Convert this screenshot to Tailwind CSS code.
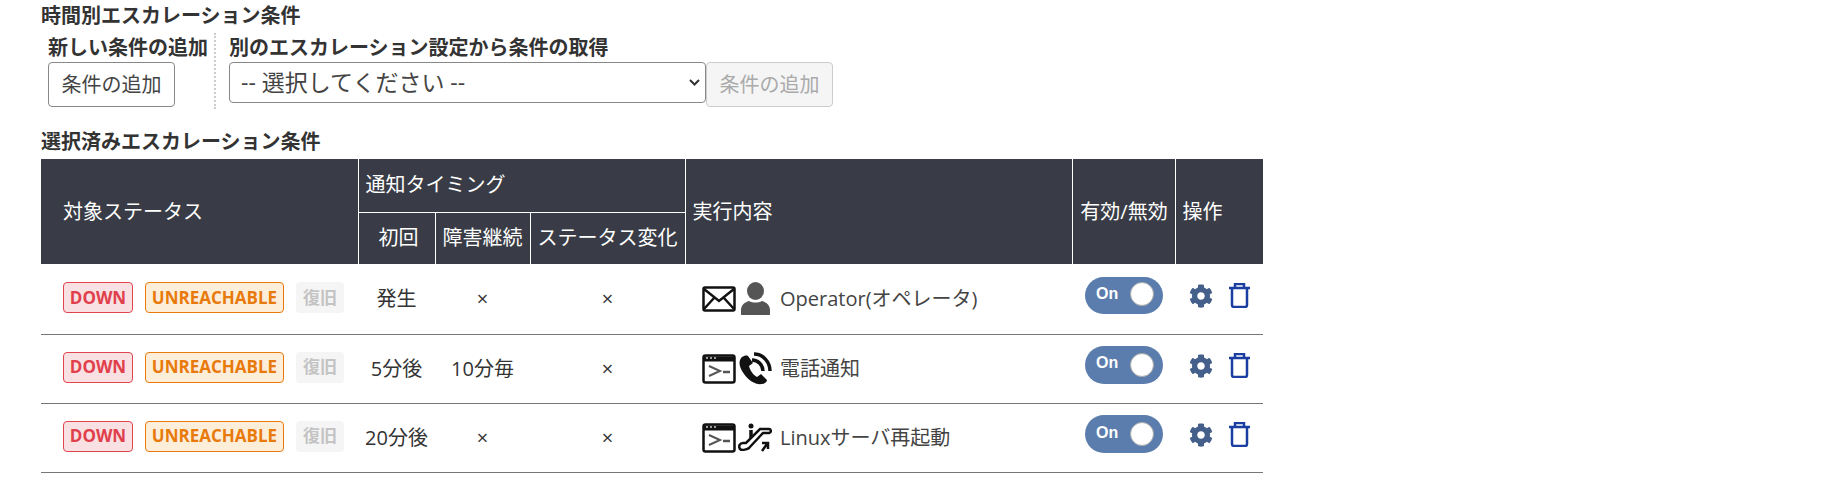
<!DOCTYPE html>
<html lang="ja">
<head>
<meta charset="UTF-8">
<title>時間別エスカレーション条件</title>
<script src="https://cdn.jsdelivr.net/npm/@tailwindcss/browser@4"></script>
</head>
<body class="bg-white text-[#333] text-[20px] font-['Open_Sans','Noto_Sans_CJK_JP',sans-serif]">
<div class="pl-[41px] pt-[1px] w-[1263px]">
	<!-- Conditions picker -->
	<h3 class="font-bold text-[20px] leading-[30px] h-[30px] text-[#333]">時間別エスカレーション条件</h3>
	<div class="flex pl-[7px] h-[76px] mt-[2px]">
		<div class="w-[168px] border-r-2 border-dotted border-[#ccc]">
			<div class="font-bold leading-[29px] text-[#333]">新しい条件の追加</div>
			<button class="h-[45px] w-[127px] border border-[#888] rounded-[4px] bg-white text-[#444]">条件の追加</button>
		</div>
		<div class="pl-[13px]">
			<div class="font-bold leading-[29px] text-[#333]">別のエスカレーション設定から条件の取得</div>
			<div class="flex items-start">
				<div class="relative">
					<select class="block appearance-none w-[477px] h-[41px] pl-[11px] border border-[#888] rounded-[4px] bg-white text-[#444] text-[23px] leading-none">
						<option>-- 選択してください --</option>
					</select>
					<svg class="absolute right-[6px] top-[17px] w-[11px] h-[7px]" viewBox="0 0 11 7" fill="none" stroke="#333" stroke-width="2"><path d="M1 1l4.500 4.500L10 1"/></svg>
				</div>
				<button disabled class="h-[45px] w-[127px] border border-[#ccc] rounded-[4px] bg-[#f5f5f5] text-[#aaa]">条件の追加</button>
			</div>
		</div>
	</div>
	<h3 class="font-bold leading-[30px] h-[30px] mt-[18px] text-[#333]">選択済みエスカレーション条件</h3>

	<!-- Selected conditions -->
	<table class="table-fixed w-[1222px] border-collapse mt-[2px]">
		<colgroup>
			<col class="w-[317px]"><col class="w-[77px]"><col class="w-[95px]"><col class="w-[155px]"><col class="w-[387px]"><col class="w-[103px]"><col class="w-[88px]">
		</colgroup>
		<thead class="bg-[#393c46] text-white">
			<tr class="h-[53px]">
				<th rowspan="2" class="font-normal text-left pl-[22px] border-r border-white">対象ステータス</th>
				<th colspan="3" class="font-normal text-left pl-[7px] border-r border-b border-white">通知タイミング</th>
				<th rowspan="2" class="font-normal text-left pl-[7px] border-r border-white">実行内容</th>
				<th rowspan="2" class="font-normal text-center pl-[1px] border-r border-white">有効/無効</th>
				<th rowspan="2" class="font-normal text-left pl-[7px]">操作</th>
			</tr>
			<tr class="h-[52px]">
				<th class="font-normal pl-[4px] border-r border-white">初回</th>
				<th class="font-normal border-r border-white">障害継続</th>
				<th class="font-normal border-r border-white">ステータス変化</th>
			</tr>
		</thead>
		<tbody>
			<tr class="h-[70px] border-b border-[#777]">
				<td class="pl-[22px]">
					<div class="flex gap-3 items-center -mt-[3px]">
						<span class="h-[31px] w-[70px] flex items-center justify-center rounded-[4px] border border-[#e0454f] bg-[#f9e0e3] text-[#e0404b] font-bold text-[17px]">DOWN</span>
						<span class="h-[31px] w-[139px] flex items-center justify-center rounded-[4px] border border-[#e87a0c] bg-[#fdeeda] text-[#e87a0c] font-bold text-[17px]">UNREACHABLE</span>
						<span class="h-[31px] w-[48px] flex items-center justify-center rounded-[4px] bg-[#f5f5f5] text-[#c4c4c4] font-bold text-[17px]">復旧</span>
					</div>
				</td>
				<td class="text-center">発生</td>
				<td class="text-center">×</td>
				<td class="text-center">×</td>
				<td class="pl-[17px]">
					<div class="flex items-center">
						<svg class="w-[34px] h-[26px]" viewBox="0 0 34 26" fill="none" stroke="#111" stroke-width="2.5"><rect x="1.5" y="1.5" width="31" height="23" rx="1.5"/><path d="M2 3l15 12L32 3M2 23l10-11M32 23L22 12"/></svg>
						<svg class="w-[29px] h-[33px] ml-[5px]" viewBox="0 0 29 33" fill="#555"><ellipse cx="14.5" cy="9" rx="8.5" ry="9"/><path d="M0 33v-5c0-5 4-8 8-9 4 2 9 2 13 0 4 1 8 4 8 9v5z"/></svg>
						<span class="ml-[10px] text-[#444]">Operator(オペレータ)</span>
					</div>
				</td>
				<td>
					<div class="flex items-center justify-between w-[78px] h-[37px] ml-[13px] -mt-[6px] pl-[11px] pr-[9px] rounded-full bg-[#5a7dad]">
						<span class="text-white font-bold text-[16px] font-['Liberation_Sans',sans-serif] -mt-[4px]">On</span>
						<span class="w-[24px] h-[24px] rounded-full bg-white border border-[#a9a9a9] -mt-[3px]"></span>
					</div>
				</td>
				<td>
					<div class="flex items-center gap-[16px] pl-[14px] -mt-[6px]">
						<svg class="w-[24px] h-[24px]" viewBox="0 0 512 512" fill="#44608a"><path d="M487.4 315.7l-42.6-24.6c4.3-23.2 4.3-47 0-70.2l42.6-24.6c4.9-2.8 7.1-8.6 5.5-14-11.1-35.6-30-67.8-54.7-94.6-3.8-4.1-10-5.1-14.8-2.3L380.8 110c-17.9-15.4-38.5-27.3-60.8-35.1V25.8c0-5.6-3.9-10.5-9.4-11.7-36.7-8.2-74.3-7.8-109.2 0-5.5 1.2-9.4 6.1-9.4 11.7V75c-22.2 7.9-42.8 19.8-60.8 35.1L88.7 85.5c-4.9-2.8-11-1.9-14.8 2.3-24.7 26.7-43.6 58.9-54.7 94.6-1.7 5.4.6 11.2 5.5 14L67.3 221c-4.3 23.2-4.3 47 0 70.2l-42.6 24.6c-4.9 2.8-7.1 8.6-5.5 14 11.1 35.6 30 67.8 54.7 94.6 3.8 4.1 10 5.1 14.8 2.3l42.6-24.6c17.9 15.4 38.5 27.3 60.8 35.1v49.2c0 5.6 3.9 10.5 9.4 11.7 36.7 8.2 74.3 7.8 109.2 0 5.5-1.2 9.4-6.1 9.4-11.7v-49.2c22.2-7.9 42.8-19.8 60.8-35.1l42.6 24.6c4.9 2.8 11 1.9 14.8-2.3 24.7-26.7 43.6-58.9 54.7-94.6 1.5-5.5-.7-11.3-5.6-14.1zM256 336c-44.1 0-80-35.9-80-80s35.9-80 80-80 80 35.9 80 80-35.9 80-80 80z"/></svg>
						<svg class="w-[21px] h-[25px]" viewBox="0 0 21 25" fill="none" stroke="#1a3fa0" stroke-width="2.5"><path d="M0 5h21M3 5v17c0 1.500 1 2 2 2h11c1 0 2-.5 2-2V5M6 5V1h9v4"/></svg>
					</div>
				</td>
			</tr>
			<tr class="h-[69px] border-b border-[#777]">
				<td class="pl-[22px]">
					<div class="flex gap-3 items-center -mt-[3px]">
						<span class="h-[31px] w-[70px] flex items-center justify-center rounded-[4px] border border-[#e0454f] bg-[#f9e0e3] text-[#e0404b] font-bold text-[17px]">DOWN</span>
						<span class="h-[31px] w-[139px] flex items-center justify-center rounded-[4px] border border-[#e87a0c] bg-[#fdeeda] text-[#e87a0c] font-bold text-[17px]">UNREACHABLE</span>
						<span class="h-[31px] w-[48px] flex items-center justify-center rounded-[4px] bg-[#f5f5f5] text-[#c4c4c4] font-bold text-[17px]">復旧</span>
					</div>
				</td>
				<td class="text-center">5分後</td>
				<td class="text-center">10分毎</td>
				<td class="text-center">×</td>
				<td class="pl-[17px]">
					<div class="flex items-center">
						<svg class="w-[34px] h-[30px]" viewBox="0 0 34 30" fill="none" stroke="#111" stroke-width="2.5"><rect x="1.5" y="1.5" width="31" height="27" rx="2"/><path d="M2 5h30" stroke-width="5"/><path d="M4 4h2M8 4h2M12 4h2" stroke="#ccc" stroke-width="1.500"/><path d="M7 12l11 5-11 5" stroke="#555" stroke-width="2"/><path d="M21 18h7" stroke="#555" stroke-width="2.500"/></svg>
						<svg class="w-[34px] h-[34px] ml-[2px]" viewBox="0 0 34 34" fill="none" stroke="#111"><path d="M4 5c-4 4-3 10 2 17 5 7 12 11 18 10 2 0 5-2 5-4l-6-6-4 3c-4-2-7-7-8-11l4-3-5-7c-2-1-4 0-6 1z" fill="#111" stroke="none"/><path d="M14 8c6 0 11 5 11 11M16 2c9 0 16 8 16 17" stroke-width="3.500"/></svg>
						<span class="ml-[8px] text-[#444]">電話通知</span>
					</div>
				</td>
				<td>
					<div class="flex items-center justify-between w-[78px] h-[38px] ml-[13px] -mt-[7px] pl-[11px] pr-[9px] rounded-full bg-[#5a7dad]">
						<span class="text-white font-bold text-[16px] font-['Liberation_Sans',sans-serif] -mt-[4px]">On</span>
						<span class="w-[24px] h-[24px] rounded-full bg-white border border-[#a9a9a9] -mt-[1px]"></span>
					</div>
				</td>
				<td>
					<div class="flex items-center gap-[16px] pl-[14px] -mt-[6px]">
						<svg class="w-[24px] h-[24px]" viewBox="0 0 512 512" fill="#44608a"><path d="M487.4 315.7l-42.6-24.6c4.3-23.2 4.3-47 0-70.2l42.6-24.6c4.9-2.8 7.1-8.6 5.5-14-11.1-35.6-30-67.8-54.7-94.6-3.8-4.1-10-5.1-14.8-2.3L380.8 110c-17.9-15.4-38.5-27.3-60.8-35.1V25.8c0-5.6-3.9-10.5-9.4-11.7-36.7-8.2-74.3-7.8-109.2 0-5.5 1.2-9.4 6.1-9.4 11.7V75c-22.2 7.9-42.8 19.8-60.8 35.1L88.7 85.5c-4.9-2.8-11-1.9-14.8 2.3-24.7 26.7-43.6 58.9-54.7 94.6-1.7 5.4.6 11.2 5.5 14L67.3 221c-4.3 23.2-4.3 47 0 70.2l-42.6 24.6c-4.9 2.8-7.1 8.6-5.5 14 11.1 35.6 30 67.8 54.7 94.6 3.8 4.1 10 5.1 14.8 2.3l42.6-24.6c17.9 15.4 38.5 27.3 60.8 35.1v49.2c0 5.6 3.9 10.5 9.4 11.7 36.7 8.2 74.3 7.8 109.2 0 5.5-1.2 9.4-6.1 9.4-11.7v-49.2c22.2-7.9 42.8-19.8 60.8-35.1l42.6 24.6c4.9 2.8 11 1.9 14.8-2.3 24.7-26.7 43.6-58.9 54.7-94.6 1.5-5.5-.7-11.3-5.6-14.1zM256 336c-44.1 0-80-35.9-80-80s35.9-80 80-80 80 35.9 80 80-35.9 80-80 80z"/></svg>
						<svg class="w-[21px] h-[25px]" viewBox="0 0 21 25" fill="none" stroke="#1a3fa0" stroke-width="2.5"><path d="M0 5h21M3 5v17c0 1.500 1 2 2 2h11c1 0 2-.5 2-2V5M6 5V1h9v4"/></svg>
					</div>
				</td>
			</tr>
			<tr class="h-[69px] border-b border-[#777]">
				<td class="pl-[22px]">
					<div class="flex gap-3 items-center -mt-[3px]">
						<span class="h-[31px] w-[70px] flex items-center justify-center rounded-[4px] border border-[#e0454f] bg-[#f9e0e3] text-[#e0404b] font-bold text-[17px]">DOWN</span>
						<span class="h-[31px] w-[139px] flex items-center justify-center rounded-[4px] border border-[#e87a0c] bg-[#fdeeda] text-[#e87a0c] font-bold text-[17px]">UNREACHABLE</span>
						<span class="h-[31px] w-[48px] flex items-center justify-center rounded-[4px] bg-[#f5f5f5] text-[#c4c4c4] font-bold text-[17px]">復旧</span>
					</div>
				</td>
				<td class="text-center">20分後</td>
				<td class="text-center">×</td>
				<td class="text-center">×</td>
				<td class="pl-[17px]">
					<div class="flex items-center">
						<svg class="w-[34px] h-[30px]" viewBox="0 0 34 30" fill="none" stroke="#111" stroke-width="2.5"><rect x="1.5" y="1.5" width="31" height="27" rx="2"/><path d="M2 5h30" stroke-width="5"/><path d="M4 4h2M8 4h2M12 4h2" stroke="#ccc" stroke-width="1.500"/><path d="M7 12l11 5-11 5" stroke="#555" stroke-width="2"/><path d="M21 18h7" stroke="#555" stroke-width="2.500"/></svg>
						<svg class="w-[34px] h-[30px] ml-[2px]" viewBox="0 0 34 30" fill="none" stroke="#111"><circle cx="13" cy="3" r="2.500" fill="#111" stroke="none"/><path d="M13 7v11" stroke-width="3.500"/><path d="M2 26c-2-3 0-6 3-6h3L22 6h9c2 0 3 3 0 4h-6L11 25c-1 1-7 3-9 1z" stroke-width="2.500" fill="#fff"/><path d="M24 28l5-7M24 20h6v6" stroke-width="2.500"/></svg>
						<span class="ml-[8px] text-[#444]">Linuxサーバ再起動</span>
					</div>
				</td>
				<td>
					<div class="flex items-center justify-between w-[78px] h-[38px] ml-[13px] -mt-[7px] pl-[11px] pr-[9px] rounded-full bg-[#5a7dad]">
						<span class="text-white font-bold text-[16px] font-['Liberation_Sans',sans-serif] -mt-[2px]">On</span>
						<span class="w-[24px] h-[24px] rounded-full bg-white border border-[#a9a9a9] -mt-[1px]"></span>
					</div>
				</td>
				<td>
					<div class="flex items-center gap-[16px] pl-[14px] -mt-[6px]">
						<svg class="w-[24px] h-[24px]" viewBox="0 0 512 512" fill="#44608a"><path d="M487.4 315.7l-42.6-24.6c4.3-23.2 4.3-47 0-70.2l42.6-24.6c4.9-2.8 7.1-8.6 5.5-14-11.1-35.6-30-67.8-54.7-94.6-3.8-4.1-10-5.1-14.8-2.3L380.8 110c-17.9-15.4-38.5-27.3-60.8-35.1V25.8c0-5.6-3.9-10.5-9.4-11.7-36.7-8.2-74.3-7.8-109.2 0-5.5 1.2-9.4 6.1-9.4 11.7V75c-22.2 7.9-42.8 19.8-60.8 35.1L88.7 85.5c-4.9-2.8-11-1.9-14.8 2.3-24.7 26.7-43.6 58.9-54.7 94.6-1.7 5.4.6 11.2 5.5 14L67.3 221c-4.3 23.2-4.3 47 0 70.2l-42.6 24.6c-4.9 2.8-7.1 8.6-5.5 14 11.1 35.6 30 67.8 54.7 94.6 3.8 4.1 10 5.1 14.8 2.3l42.6-24.6c17.9 15.4 38.5 27.3 60.8 35.1v49.2c0 5.6 3.9 10.5 9.4 11.7 36.7 8.2 74.3 7.8 109.2 0 5.5-1.2 9.4-6.1 9.4-11.7v-49.2c22.2-7.9 42.8-19.8 60.8-35.1l42.6 24.6c4.9 2.8 11 1.9 14.8-2.3 24.7-26.7 43.6-58.9 54.7-94.6 1.5-5.5-.7-11.3-5.6-14.1zM256 336c-44.1 0-80-35.9-80-80s35.9-80 80-80 80 35.9 80 80-35.9 80-80 80z"/></svg>
						<svg class="w-[21px] h-[25px]" viewBox="0 0 21 25" fill="none" stroke="#1a3fa0" stroke-width="2.5"><path d="M0 5h21M3 5v17c0 1.500 1 2 2 2h11c1 0 2-.5 2-2V5M6 5V1h9v4"/></svg>
					</div>
				</td>
			</tr>
		</tbody>
	</table>
</div>
</body>
</html>
